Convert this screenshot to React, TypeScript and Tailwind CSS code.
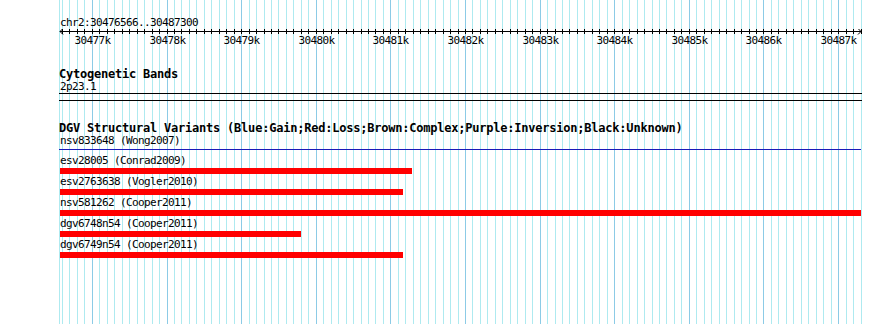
import React from "react";

const START = 30476566;
const END = 30487300;
const X0 = 60;
const W = 801;
const sx = (p: number) => X0 + ((p - START) * W) / (END - START);

const gridPositions: number[] = [];
for (let p = 30476600; p <= END; p += 100) gridPositions.push(p);

function Grid() {
  return (
    <svg
      className="absolute inset-0 pointer-events-none"
      width={890}
      height={324}
      viewBox="0 0 890 324"
    >
      <line x1={59.5} x2={59.5} y1={0} y2={324} stroke="#aeeaf0" strokeWidth={1} />
      {gridPositions.map((p) => {
        const major = p % 1000 === 0;
        const x = Math.floor(sx(p)) + 0.5;
        return (
          <line
            key={p}
            x1={x}
            x2={x}
            y1={0}
            y2={324}
            stroke={major ? "#8ccbe6" : "#aeeaf0"}
            strokeWidth={1}
          />
        );
      })}
    </svg>
  );
}

function Ruler() {
  return (
    <svg width={890} height={17} viewBox="0 0 890 17" className="block">
      <line x1={60} x2={861} y1={2.5} y2={2.5} stroke="#000" strokeWidth={1} />
      <polyline points="63,-0.5 60,2.5 63,5.5" fill="none" stroke="#000" strokeWidth={1} />
      <polyline points="858,-0.5 861,2.5 858,5.5" fill="none" stroke="#000" strokeWidth={1} />
      {gridPositions.map((p) => {
        const x = Math.floor(sx(p)) + 0.5;
        return <line key={p} x1={x} x2={x} y1={0} y2={5} stroke="#000" strokeWidth={1} />;
      })}
      {gridPositions
        .filter((p) => p % 1000 === 0)
        .map((p) => (
          <text
            key={p}
            x={Math.floor(sx(p)) + 0.5}
            y={14.5}
            textAnchor="middle"
            fontFamily="DejaVu Sans Mono, monospace"
            fontSize={11}
            letterSpacing={-0.62}
            fill="#000"
          >
            {p / 1000}k
          </text>
        ))}
    </svg>
  );
}

const features = [
  { label: "esv28005 (Conrad2009)", end: 412 },
  { label: "esv2763638 (Vogler2010)", end: 403 },
  { label: "nsv581262 (Cooper2011)", end: 861 },
  { label: "dgv6748n54 (Cooper2011)", end: 301 },
  { label: "dgv6749n54 (Cooper2011)", end: 403 },
];

const small = "text-[11px] leading-[11px] tracking-[-0.62px] h-[11px] text-black whitespace-nowrap";
const bold = "text-[12px] leading-[12px] tracking-[-0.22px] h-[12px] font-bold text-black whitespace-nowrap";

export default function App() {
  return (
    <div className="relative w-[890px] h-[324px] bg-white overflow-hidden [font-family:'DejaVu_Sans_Mono',monospace]">
      <Grid />
      <div className="relative flex flex-col">
        <div className={`${small} mt-[17px] pl-[60px]`}>chr2:30476566..30487300</div>
        <div className="mt-[1px]">
          <Ruler />
        </div>
        <div className={`${bold} mt-[22px] pl-[59px]`}>Cytogenetic Bands</div>
        <div className={`${small} mt-[1px] pl-[60px]`}>2p23.1</div>
        <div className="mt-[1px] ml-[59px] w-[803px] h-px bg-black" />
        <div className="mt-[6px] ml-[59px] w-[803px] h-px bg-black" />
        <div className={`${bold} mt-[21px] pl-[59px]`}>
          DGV Structural Variants (Blue:Gain;Red:Loss;Brown:Complex;Purple:Inversion;Black:Unknown)
        </div>
        <div className={`${small} mt-[1px] pl-[60px]`}>nsv833648 (Wong2007)</div>
        <div className="mt-[3px] ml-[59px] w-[802px] h-px bg-[#1a1ab8]" />
        <div className="mt-[5px] flex flex-col gap-[2px]">
          {features.map((f) => (
            <div key={f.label} className="flex flex-col">
              <div className={`${small} pl-[60px]`}>{f.label}</div>
              <div className="mt-[2px] ml-[60px] h-[6px] bg-[#ff0000]" style={{ width: f.end - 60 }} />
            </div>
          ))}
        </div>
      </div>
    </div>
  );
}
